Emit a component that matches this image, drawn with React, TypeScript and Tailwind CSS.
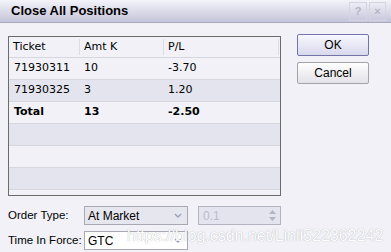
import { ReactNode } from 'react';

const rows = [
  { ticket: '71930311', amt: '10', pl: '-3.70' },
  { ticket: '71930325', amt: '3', pl: '1.20' },
];

const Chevron = () => (
  <svg width="8" height="5" viewBox="0 0 8 5" className="text-[#9aa0b8]">
    <path d="M1 1l3 3 3-3" fill="none" stroke="currentColor" strokeWidth="1.4" />
  </svg>
);

const Select = ({ value, bg }: { value: string; bg: string }) => (
  <div className={`flex h-[19px] w-[104px] items-center border border-[#a9a9b4] ${bg}`}>
    <span className="flex-1 pl-[3px] text-[12px] text-black">{value}</span>
    <span className="flex w-[18px] justify-center">
      <Chevron />
    </span>
  </div>
);

const Row = ({ cells, dark, bold }: { cells: ReactNode[]; dark?: boolean; bold?: boolean }) => (
  <div
    className={`flex h-[22px] shrink-0 items-center border-b border-[#d6d6de] ${
      dark ? 'bg-[#e4e4ee]' : 'bg-[#f1f1f7]'
    } ${bold ? 'font-bold' : ''}`}
  >
    <span className="w-[71px] pl-[5px]">{cells[0]}</span>
    <span className="w-[84px] pl-[4px]">{cells[1]}</span>
    <span className="pl-[4px]">{cells[2]}</span>
  </div>
);

export default function App() {
  return (
    <div className="relative flex h-[252px] w-[391px] flex-col overflow-hidden bg-[#f1f1f7] font-['Liberation_Sans',Arial,sans-serif]">
      {/* title bar */}
      <div className="flex h-[23px] shrink-0 items-center justify-between border-b border-[#a9a9c0] bg-gradient-to-b from-[#f3f3f9] to-[#c5c5da] pl-[11px] pr-[5px]">
        <span className="text-[13px] font-bold text-black">Close All Positions</span>
        <div className="flex gap-[2px]">
          <span className="flex h-[19px] w-[18px] items-center justify-center border border-[#d4d4e2] text-[11px] font-bold text-[#b4b4c4]">
            ?
          </span>
          <span className="flex h-[19px] w-[17px] items-center justify-center border border-[#d4d4e2] text-[11px] font-bold text-[#b4b4c4]">
            ×
          </span>
        </div>
      </div>

      <div className="flex pl-[8px] pt-[13px]">
        {/* grid */}
        <div className="flex h-[160px] w-[273px] flex-col overflow-hidden border border-[#6b6b6b] font-['DejaVu_Sans',Verdana,sans-serif] text-[11px] text-black">
          <div className="flex h-[21px] shrink-0 items-center border-b border-[#d6d6de] bg-[#f1f1f7]">
            <span className="w-[71px] border-r border-[#dcdce4] pl-[4px] leading-[16px]">Ticket</span>
            <span className="w-[84px] border-r border-[#dcdce4] pl-[4px] leading-[16px]">Amt K</span>
            <span className="w-[115px] border-r border-[#dcdce4] pl-[4px] leading-[16px]">P/L</span>
          </div>
          {rows.map((r, i) => (
            <Row key={r.ticket} cells={[r.ticket, r.amt, r.pl]} dark={i % 2 === 1} />
          ))}
          <Row cells={['Total', '13', '-2.50']} bold />
          <Row cells={['', '', '']} dark />
          <Row cells={['', '', '']} />
          <Row cells={['', '', '']} dark />
          <Row cells={['', '', '']} />
        </div>

        {/* buttons */}
        <div className="ml-[16px] flex w-[72px] flex-col gap-[6px] pt-[-2px] -mt-[2px] text-[12px] text-black">
          <button className="h-[22px] rounded-[2px] border border-[#7474ac] bg-gradient-to-b from-[#f7f7fd] to-[#d9d9ee]">
            OK
          </button>
          <button className="h-[22px] rounded-[2px] border border-[#a3a3ab] bg-gradient-to-b from-[#ffffff] to-[#e2e2e8]">
            Cancel
          </button>
        </div>
      </div>

      {/* order options */}
      <div className="mt-[10px] flex flex-col gap-[6px] pl-[8px] text-[11.5px] text-black">
        <div className="flex items-center">
          <span className="w-[76px]">Order Type:</span>
          <Select value="At Market" bg="bg-[#e6e6ee]" />
          <div className="ml-[10px] flex h-[19px] w-[83px] items-center border border-[#b4b4c0] bg-[#e4e4ee]">
            <span className="flex-1 pl-[4px] text-[12px] text-[#bcbccb]">0.1</span>
            <span className="flex w-[14px] flex-col items-center gap-[3px] pr-[2px]">
              <svg width="7" height="4" viewBox="0 0 7 4">
                <path d="M0 4L3.5 0 7 4z" fill="#b4b4c4" />
              </svg>
              <svg width="7" height="4" viewBox="0 0 7 4">
                <path d="M0 0L3.5 4 7 0z" fill="#b4b4c4" />
              </svg>
            </span>
          </div>
        </div>
        <div className="flex items-center">
          <span className="w-[76px]">Time In Force:</span>
          <Select value="GTC" bg="bg-white" />
        </div>
      </div>

      {/* watermark */}
      <span className="pointer-events-none absolute left-[127px] top-[224px] text-[16px] text-white [text-shadow:0_0_1px_#9a9aa6]">
        https://blog.csdn.net/Linli522362242
      </span>
    </div>
  );
}
